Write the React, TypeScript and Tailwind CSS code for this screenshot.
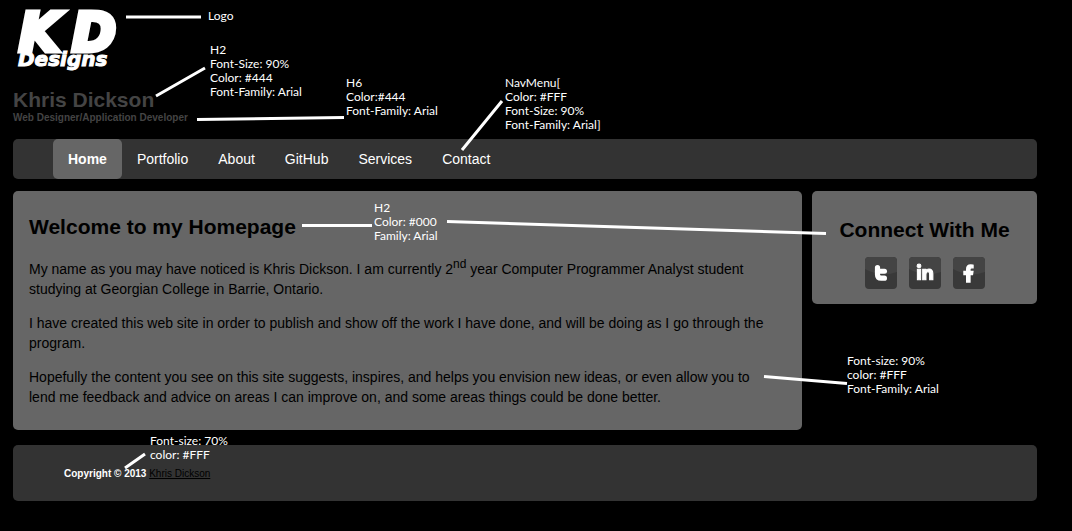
import { FaFacebookF, FaLinkedinIn } from "react-icons/fa";
import type { ReactNode } from "react";

const navItems = ["Home", "Portfolio", "About", "GitHub", "Services", "Contact"];

function Logo() {
  return (
    <svg
      role="img"
      aria-label="KD Designs"
      viewBox="0 0 112 72"
      className="block h-[72px] w-28 overflow-visible fill-white stroke-white font-['DejaVu_Sans',sans-serif] font-bold italic"
    >
      <text x="6" y="51" fontSize="53" strokeWidth="5">K</text>
      <text x="59" y="51" fontSize="53" strokeWidth="5">D</text>
      <text x="5" y="66" fontSize="20" strokeWidth="1">Designs</text>
    </svg>
  );
}

function TwitterMark() {
  return (
    <svg viewBox="0 0 16 16" className="size-4" fill="none" stroke="currentColor" strokeLinecap="round" strokeLinejoin="round">
      <path d="M4.5 2.6V9.5q0 3.7 3.7 3.7h3.2" strokeWidth="5.2" />
      <path d="M4.5 6.2H11.5" strokeWidth="5" />
    </svg>
  );
}

function SocialLink({ label, children }: { label: string; children: ReactNode }) {
  return (
    <a
      href="#"
      aria-label={label}
      className="relative flex size-8 items-center justify-center overflow-hidden rounded bg-[#393939] text-white"
    >
      <svg viewBox="0 0 32 32" className="absolute inset-0 size-8" aria-hidden="true">
        <path d="M0 0H32V15Q16 21 0 12Z" fill="#444444" />
      </svg>
      <span className="relative">{children}</span>
    </a>
  );
}

function Note({ className, lines }: { className: string; lines: string[] }) {
  return (
    <div className={`absolute text-xs leading-[14px] whitespace-nowrap text-white ${className}`}>
      {lines.map((line) => (
        <p key={line}>{line}</p>
      ))}
    </div>
  );
}

function Annotations() {
  return (
    <aside aria-label="Style notes" className="pointer-events-none absolute inset-0 font-['Lato',sans-serif]">
      <svg className="absolute top-0 left-0 h-[531px] w-[1072px]" fill="none" stroke="white" strokeWidth="3" aria-hidden="true">
        <path d="M126 17H201M156 96L205 68M197 119.5L344 117.5M462 150L502 101M302 225.5H372M447 221.5L826 233.5M764 376.5L847 383.5M125 468L145 454" />
      </svg>
      <Note className="top-[9px] left-[208px]" lines={["Logo"]} />
      <Note className="top-[43px] left-[210px]" lines={["H2", "Font-Size: 90%", "Color: #444", "Font-Family: Arial"]} />
      <Note className="top-[76px] left-[346px]" lines={["H6", "Color:#444", "Font-Family: Arial"]} />
      <Note className="top-[76px] left-[505px]" lines={["NavMenu[", "Color: #FFF", "Font-Size: 90%", "Font-Family: Arial]"]} />
      <Note className="top-[201px] left-[374px]" lines={["H2", "Color: #000", "Family: Arial"]} />
      <Note className="top-[354px] left-[847px]" lines={["Font-size: 90%", "color: #FFF", "Font-Family: Arial"]} />
      <Note className="top-[434px] left-[150px]" lines={["Font-size: 70%", "color: #FFF"]} />
    </aside>
  );
}

export default function App() {
  return (
    <div className="relative min-h-screen bg-black pr-[35px] pb-[30px] pl-[13px] font-['Liberation_Sans',Arial,sans-serif] text-sm text-black">
      <header className="text-[#444]">
        <Logo />
        <h2 className="mt-4 text-[21px] leading-6 font-bold">Khris Dickson</h2>
        <h6 className="text-[10px] leading-3 font-bold">Web Designer/Application Developer</h6>
      </header>

      <nav className="mt-[15px] rounded-[5px] bg-[#333] pl-10">
        <ul className="flex">
          {navItems.map((item) => (
            <li key={item}>
              <a
                href="#"
                className={`block rounded-[5px] px-[15px] leading-10 text-white ${item === "Home" ? "bg-[#666] font-bold" : ""}`}
              >
                {item}
              </a>
            </li>
          ))}
        </ul>
      </nav>

      <div className="mt-3 flex items-start gap-[10px]">
        <main className="flex-1 rounded-[5px] bg-[#666] pt-6 pr-7 pb-[23px] pl-4">
          <h2 className="text-[21px] leading-6 font-bold">Welcome to my Homepage</h2>
          <div className="mt-5 space-y-[14px] leading-5">
            <p>
              My name as you may have noticed is Khris Dickson. I am currently 2
              <sup className="text-xs leading-none">nd</sup> year Computer Programmer Analyst student studying at
              Georgian College in Barrie, Ontario.
            </p>
            <p>
              I have created this web site in order to publish and show off the work I have done, and will be doing as I
              go through the program.
            </p>
            <p>
              Hopefully the content you see on this site suggests, inspires, and helps you envision new ideas, or even
              allow you to lend me feedback and advice on areas I can improve on, and some areas things could be done
              better.
            </p>
          </div>
        </main>

        <section className="w-[225px] rounded-[5px] bg-[#666] pt-[27px] pb-[15px] text-center">
          <h2 className="text-[21px] leading-6 font-bold">Connect With Me</h2>
          <div className="mt-[15px] flex justify-center gap-3">
            <SocialLink label="Twitter">
              <TwitterMark />
            </SocialLink>
            <SocialLink label="LinkedIn">
              <FaLinkedinIn className="size-[18px] overflow-visible" strokeWidth="30" />
            </SocialLink>
            <SocialLink label="Facebook">
              <FaFacebookF className="size-[17px] overflow-visible" strokeWidth="40" />
            </SocialLink>
          </div>
        </section>
      </div>

      <footer className="mt-[15px] rounded-[5px] bg-[#333] px-[51px] pt-[22px] pb-[20px] text-[10px] leading-[14px] text-white">
        <strong>Copyright © 2013</strong>{" "}
        <a href="#" className="text-black underline">
          Khris Dickson
        </a>
      </footer>

      <Annotations />
    </div>
  );
}
